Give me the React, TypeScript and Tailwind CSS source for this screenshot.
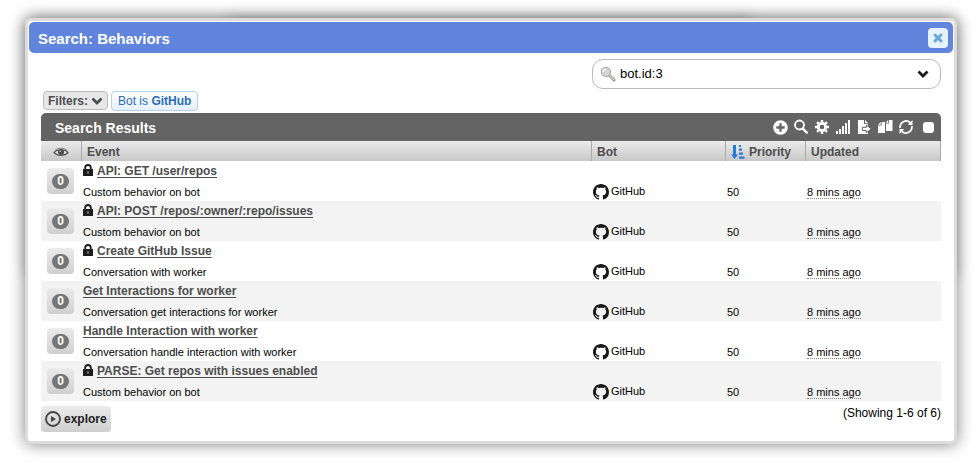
import { FaPlusCircle } from 'react-icons/fa';
import { LuX } from 'react-icons/lu';

type Row = { title: string; note: string; locked: boolean };

const rows: Row[] = [
  { title: 'API: GET /user/repos', note: 'Custom behavior on bot', locked: true },
  { title: 'API: POST /repos/:owner/:repo/issues', note: 'Custom behavior on bot', locked: true },
  { title: 'Create GitHub Issue', note: 'Conversation with worker', locked: true },
  { title: 'Get Interactions for worker', note: 'Conversation get interactions for worker', locked: false },
  { title: 'Handle Interaction with worker', note: 'Conversation handle interaction with worker', locked: false },
  { title: 'PARSE: Get repos with issues enabled', note: 'Custom behavior on bot', locked: true },
];

function Chevron() {
  return (
    <svg viewBox="0 0 12 8" className="h-2 w-3" aria-hidden="true">
      <path d="M1.5 1.5 L6 6 L10.5 1.5" fill="none" stroke="currentColor" strokeWidth="2.8" />
    </svg>
  );
}

function Magnifier() {
  return (
    <svg viewBox="0 0 16 16" className="size-4 shrink-0" aria-hidden="true">
      <path d="M9.5 9.5 L14 14" stroke="#8b8b8b" strokeWidth="3" strokeLinecap="round" />
      <path d="M9.5 9.5 L13.7 13.7" stroke="#d6d6d6" strokeWidth="1.4" strokeLinecap="round" />
      <circle cx="6" cy="6" r="4.6" fill="#d4d4d4" stroke="#a0a0a0" strokeWidth="1" />
      <path d="M3.2 6 A2.8 2.8 0 0 1 6 3.2" fill="none" stroke="#fff" strokeWidth="1.6" />
    </svg>
  );
}

function SearchIcon() {
  return (
    <svg viewBox="0 0 16 16" className="size-4" fill="none" stroke="currentColor" aria-hidden="true">
      <circle cx="6.5" cy="6" r="4.5" strokeWidth="1.8" />
      <path d="M9.8 9.6 L13.8 13.6" strokeWidth="2.4" strokeLinecap="round" />
    </svg>
  );
}

function GearIcon() {
  return (
    <svg viewBox="0 0 16 16" className="size-4" fill="none" stroke="currentColor" aria-hidden="true">
      <circle cx="8" cy="8" r="3.7" strokeWidth="2.8" />
      <path
        d="M8 1v2.4M8 12.6V15M1 8h2.4M12.6 8H15M3.05 3.05l1.7 1.7M11.25 11.25l1.7 1.7M3.05 12.95l1.7-1.7M11.25 4.75l1.7-1.7"
        strokeWidth="2.4"
      />
    </svg>
  );
}

function SignalIcon() {
  return (
    <svg viewBox="0 0 16 16" className="size-4" fill="currentColor" aria-hidden="true">
      <path d="M1 12h2v3H1zM4 10h2v5H4zM7 7h2v8H7zM10 4h2v11h-2zM13 1h2v14h-2z" />
    </svg>
  );
}

function ExportIcon() {
  return (
    <svg viewBox="0 0 16 16" className="size-4" fill="currentColor" aria-hidden="true">
      <path d="M2 1h6v4h4v10H2zM9 1l3.2 3.2H9z" />
      <path d="M6.3 8.3h4V6l5 3.9-5 3.9v-2.3h-4z" stroke="#646464" strokeWidth="1" />
    </svg>
  );
}

function CopyIcon() {
  return (
    <svg viewBox="0 0 16 16" className="size-4" fill="currentColor" aria-hidden="true">
      <path d="M4.6 3H8v11H1V6.6h3.6zM3.8 3v2.8H1z" />
      <path d="M12 1h3.5v11H9V4.6h3zM11.2 1v2.8H8.6z" />
    </svg>
  );
}

function RefreshIcon() {
  return (
    <svg viewBox="0 0 16 16" className="size-4" aria-hidden="true">
      <path d="M2.2 9 A6 6 0 0 1 12.4 3.8 M13.8 7 A6 6 0 0 1 3.6 12.2" fill="none" stroke="currentColor" strokeWidth="1.7" />
      <path d="M14.5 1v5H9.8zM1.5 15v-5h4.7z" fill="currentColor" />
    </svg>
  );
}

function SortIcon() {
  return (
    <svg viewBox="0 0 14 14" className="size-[14px]" fill="#2a7ad8" aria-hidden="true">
      <path d="M2 0h3v9.5h2.1L3.6 14 0 9.5h2z" />
      <path d="M8 0h2v2H8zM8 3.5h3v2.2H8zM8 7.5h4v2.2H8zM8 11.5h5.5v2.2H8z" />
    </svg>
  );
}

function EyeIcon() {
  return (
    <svg viewBox="0 0 16 10" className="inline-block h-[10px] w-4" aria-hidden="true">
      <path d="M1 5.5 C4 1.8 12 1.8 15 5.5 C12 9.2 4 9.2 1 5.5Z" fill="#ddd" stroke="#555" strokeWidth="1.2" />
      <path d="M2 3.5 C5 .5 11 .5 14 3.5" fill="none" stroke="#666" strokeWidth=".8" />
      <circle cx="8" cy="5" r="3" fill="#4d4d4d" />
      <circle cx="7.2" cy="4.2" r=".8" fill="#ddd" />
    </svg>
  );
}

function LockIcon() {
  return (
    <svg viewBox="0 0 10 12" className="mr-1 inline-block h-3 w-[10px] align-[-1px]" role="img" aria-label="Locked">
      <path d="M2.2 6V3.8a2.8 2.8 0 0 1 5.6 0V6" fill="none" stroke="#1c1c1c" strokeWidth="1.8" />
      <path d="M0 5h10v7H0z" fill="#1c1c1c" />
      <path d="M4.4 7.2h1.2v2.6H4.4z" fill="#aaa" />
    </svg>
  );
}

function OctocatIcon() {
  return (
    <svg viewBox="0 0 16 16" className="size-4" fill="#181818" aria-hidden="true">
      <path d="M8 0C3.58 0 0 3.58 0 8c0 3.54 2.29 6.53 5.47 7.59.4.07.55-.17.55-.38 0-.19-.01-.82-.01-1.49-2.01.37-2.53-.49-2.69-.94-.09-.23-.48-.94-.82-1.13-.28-.15-.68-.52-.01-.53.63-.01 1.08.58 1.23.82.72 1.21 1.87.87 2.33.66.07-.52.28-.87.51-1.07-1.78-.2-3.64-.89-3.64-3.95 0-.87.31-1.59.82-2.15-.08-.2-.36-1.02.08-2.12 0 0 .67-.21 2.2.82.64-.18 1.32-.27 2-.27s1.36.09 2 .27c1.53-1.04 2.2-.82 2.2-.82.44 1.1.16 1.92.08 2.12.51.56.82 1.27.82 2.15 0 3.07-1.87 3.75-3.65 3.95.29.25.54.73.54 1.48 0 1.07-.01 1.93-.01 2.2 0 .21.15.46.55.38A8.01 8.01 0 0 0 16 8c0-4.42-3.58-8-8-8z" />
    </svg>
  );
}

const toolButton = 'flex size-4 items-center justify-center';
const headCell = 'border-l border-[#aaa] px-[5px] pt-px text-left text-[12px] leading-[18px] font-bold';

export default function App() {
  return (
    <div className="min-h-[474px] bg-white pt-[18px] pr-[22px] pl-[25px] font-['Liberation_Sans',Arial,sans-serif] text-black">
      <div className="relative">
        <div className="absolute inset-x-0 top-0 h-[258px] rounded-md shadow-[0_0_14px_rgba(0,0,0,0.2)]" />
        <div className="absolute inset-x-[22%] top-0 h-20 shadow-[0_0_14px_rgba(0,0,0,0.2)]" />
        <section
          role="dialog"
          aria-labelledby="dialog-title"
          className="relative rounded-md border-[3px] border-[#dcdcdc] bg-white p-px shadow-[0_0_16px_rgba(0,0,0,0.5)]"
        >
          <header className="flex h-[31px] items-center justify-between rounded-[5px] bg-[#6184dd] pr-[5px] pl-[9px]">
            <h1 id="dialog-title" className="pt-[3px] text-[15px] font-bold text-white">Search: Behaviors</h1>
            <button type="button" aria-label="Close" className="flex size-5 items-center justify-center rounded bg-[#e6f2fc] text-[#6ba8d8]">
              <LuX size={12} strokeWidth={6} />
            </button>
          </header>
          <main className="px-3 pt-[6px] pb-2">
            <div className="flex justify-end">
              <div className="flex h-[30px] w-[349px] items-center rounded-[11px] border border-[#bbb] pr-[11px] pl-[7px]">
                <Magnifier />
                <input aria-label="Search" defaultValue="bot.id:3" className="ml-1 min-w-0 flex-1 text-[13px] outline-none" />
                <button type="button" aria-label="Search options" className="text-[#1c1c1c]"><Chevron /></button>
              </div>
            </div>
            <div className="mt-[2px] ml-[2px] flex items-start gap-[3px]">
              <button type="button" className="flex h-[19px] items-center gap-[3px] rounded border border-[#bbb] bg-[#e7e7e7] px-1 text-[12px] font-bold text-[#4d4d4d]">
                Filters: <Chevron />
              </button>
              <button type="button" className="h-5 rounded border border-[#b5d2ea] bg-linear-to-b from-white to-[#e4f0fc] px-[6px] text-[12px] leading-[18px] text-[#2c6cb4]">
                Bot is <b>GitHub</b>
              </button>
            </div>
            <div className="mt-[2px] flex h-7 items-center justify-between rounded-t-[5px] bg-[#646464] pr-[7px] pl-[14px] text-white">
              <h2 className="pt-[3px] text-[14px] font-bold">Search Results</h2>
              <div className="flex items-center gap-[5px]">
                <button type="button" aria-label="Add" className={toolButton}><FaPlusCircle size={15} /></button>
                <button type="button" aria-label="Search" className={toolButton}><SearchIcon /></button>
                <button type="button" aria-label="Settings" className={toolButton}><GearIcon /></button>
                <button type="button" aria-label="Charts" className={toolButton}><SignalIcon /></button>
                <button type="button" aria-label="Export" className={toolButton}><ExportIcon /></button>
                <button type="button" aria-label="Copy" className={toolButton}><CopyIcon /></button>
                <button type="button" aria-label="Refresh" className={toolButton}><RefreshIcon /></button>
                <input type="checkbox" aria-label="Select all" className="ml-1 size-[11px] appearance-none rounded-[3px] bg-white" />
              </div>
            </div>
            <table className="w-full table-fixed border-separate border-spacing-0">
              <colgroup>
                <col className="w-10" />
                <col />
                <col className="w-[134px]" />
                <col className="w-20" />
                <col className="w-[136px]" />
              </colgroup>
              <thead>
                <tr className="h-5 bg-linear-to-b from-[#ebebeb] to-[#c8c8c8] text-[#4d4d4d]">
                  <th className="text-center leading-none" aria-label="Watchers"><EyeIcon /></th>
                  <th className={headCell}>Event</th>
                  <th className={headCell}>Bot</th>
                  <th className={headCell}>
                    <span className="flex items-center gap-1"><SortIcon />Priority</span>
                  </th>
                  <th className={`${headCell} border-r`}>Updated</th>
                </tr>
              </thead>
              <tbody>
                {rows.map((row) => (
                  <tr key={row.title} className="h-10 even:bg-[#f3f3f3]">
                    <td className="pl-[6px] align-top">
                      <button type="button" className="mt-[7px] flex h-[26px] w-[27px] items-center justify-center rounded bg-linear-to-b from-[#ebebeb] to-[#cfcfcf]">
                        <span className="h-[15px] w-[17px] rounded-full bg-[#767676] text-center text-[12px] leading-[15px] font-bold text-white">0</span>
                      </button>
                    </td>
                    <td className="pl-[2px] align-top">
                      <div className="h-[22px] text-[12px] leading-5 font-bold text-[#4d4d4d]">
                        {row.locked && <LockIcon />}
                        <a href="#" className="underline underline-offset-2">{row.title}</a>
                      </div>
                      <div className="text-[11px] leading-[18px]">{row.note}</div>
                    </td>
                    <td className="pl-[2px] align-bottom">
                      <div className="flex h-[19px] items-center gap-[2px] text-[11px]"><OctocatIcon />GitHub</div>
                    </td>
                    <td className="pl-[2px] align-bottom text-[11px] leading-[18px]">50</td>
                    <td className="pl-[2px] align-bottom text-[11px] leading-[18px]">
                      <span className="border-b border-dotted border-[#888]">8 mins ago</span>
                    </td>
                  </tr>
                ))}
              </tbody>
            </table>
            <div className="flex items-start justify-between pt-[5px]">
              <button type="button" className="flex h-[26px] items-center gap-[3px] rounded bg-linear-to-b from-[#ebebeb] to-[#cfcfcf] px-1 text-[12px] font-bold text-[#222]">
                <svg viewBox="0 0 16 16" className="size-4" aria-hidden="true">
                  <circle cx="8" cy="8" r="7" fill="none" stroke="#444" strokeWidth="1.8" />
                  <path d="M6 5l5 3-5 3z" fill="#444" />
                </svg>
                explore
              </button>
              <p className="text-[12px] leading-[14px]">(Showing 1-6 of 6)</p>
            </div>
          </main>
        </section>
      </div>
    </div>
  );
}
